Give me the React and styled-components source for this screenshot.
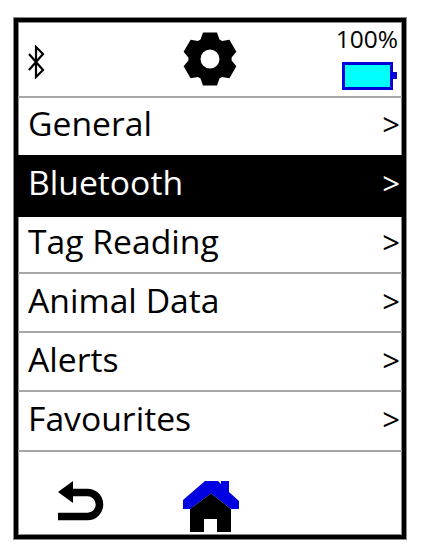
import styled, { createGlobalStyle } from "styled-components";

const GlobalStyle = createGlobalStyle`
  html, body {
    margin: 0;
    padding: 0;
    background: #fff;
  }
`;

// Device outline
const Frame = styled.div`
  box-sizing: border-box;
  width: 394px;
  height: 523px;
  margin: 17px 0 0 13px;
  border: 5px solid #000;
  outline: 1px solid #8a8a8a;
  outline-offset: -1px;
  box-shadow: inset 0 0 0 1px #8a8a8a;
  display: flex;
  flex-direction: column;
  font-family: "Open Sans", "Noto Sans", sans-serif;
  color: #000;
`;

const Header = styled.div`
  height: 74px;
  flex: none;
  display: grid;
  grid-template-columns: 1fr auto 1fr;
  align-items: center;
  padding: 0 5px;
  border-bottom: 2px solid #a6a6a6;
`;

const BluetoothSlot = styled.div`
  display: flex;
  padding: 6px 0 0 5px;
`;

const Status = styled.div`
  align-self: start;
  display: flex;
  flex-direction: column;
  align-items: flex-end;
  gap: 6px;
  margin-right: -1px;
`;

const Percent = styled.div`
  font-size: 24.5px;
  line-height: 34px;
`;

// Battery is a plain css box with a small tip
const Battery = styled.div`
  position: relative;
  box-sizing: border-box;
  width: 51px;
  height: 28px;
  margin-right: 5px;
  background: #00ffff;
  border: 3px solid #0000dc;
  &::after {
    content: "";
    position: absolute;
    right: -7px;
    top: 7px;
    width: 4px;
    height: 7px;
    background: #0000dc;
  }
`;

const Row = styled.div`
  box-sizing: border-box;
  height: ${(p) => p.$height}px;
  flex: none;
  display: flex;
  align-items: center;
  justify-content: space-between;
  margin: ${(p) => (p.$selected ? "0 -5px" : "0")};
  padding-left: ${(p) => (p.$selected ? "15px" : "10px")};
  padding-right: ${(p) => (p.$selected ? "7px" : "2px")};
  padding-bottom: ${(p) => p.$lift}px;
  background: ${(p) => (p.$selected ? "#000" : "transparent")};
  color: ${(p) => (p.$selected ? "#fff" : "#000")};
  border-bottom: ${(p) => (p.$plain ? "none" : "2px solid #a6a6a6")};
  font-size: 33.7px;
`;

const Label = styled.span`
  line-height: 44px;
`;

const Chevron = styled.span`
  font-size: 31px;
  line-height: 40px;
  margin-top: 2px;
`;

const Footer = styled.div`
  flex: 1;
  display: flex;
  align-items: flex-start;
  gap: 79px;
  padding: 29px 0 0 40px;
`;

// six tooth gear outline, built around the centre of a 54x54 box
const gearPath = () => {
  const c = 27;
  const pts = [];
  for (let i = 0; i < 6; i++) {
    const a = ((i * 60 - 90) * Math.PI) / 180;
    const p = (r, t) => [
      c + r * Math.cos(a) - t * Math.sin(a),
      c + r * Math.sin(a) + t * Math.cos(a),
    ];
    pts.push(p(19.5, -9.5), p(26.5, -7), p(26.5, 7), p(19.5, 9.5));
  }
  return "M" + pts.map((q) => q.map((n) => n.toFixed(1)).join(" ")).join("L") + "Z";
};

const GearIcon = () => (
  <svg width="54" height="54" viewBox="0 0 54 54">
    <path
      fillRule="evenodd"
      d={gearPath() + "M27 17.5a9.5 9.5 0 1 0 0 19a9.5 9.5 0 1 0 0-19Z"}
    />
  </svg>
);

const BluetoothIcon = () => (
  <svg width="17" height="34" viewBox="0 0 17 34" fill="none" stroke="#000" strokeWidth="2.2">
    <path d="M1 9L15 25L8 32V2L15 9L1 25" />
  </svg>
);

const BackIcon = () => (
  <svg width="46" height="40" viewBox="0 0 46 40">
    <path d="M0 11L15 0V22Z" />
    <path d="M12 11.5H29.5A12 12 0 0 1 29.5 35.5H0" fill="none" stroke="#000" strokeWidth="7.5" />
  </svg>
);

const HomeIcon = () => (
  <svg width="56" height="51" viewBox="0 0 56 51">
    <path
      fill="#0000e0"
      d="M0 19L22 0H35L38 3V0H46V11L56 20V28H48L28 12.5L7 28H0Z"
    />
    <path d="M7 28L28 12.5L48 28V51H34V38H21V51H7Z" />
  </svg>
);

const rows = [
  { label: "General", height: 57, lift: 8 },
  { label: "Bluetooth", height: 62, lift: 8, selected: true },
  { label: "Tag Reading", height: 57, lift: 8 },
  { label: "Animal Data", height: 59, lift: 6 },
  { label: "Alerts", height: 59, lift: 6 },
  { label: "Favourites", height: 60, lift: 6 },
];

export default function App() {
  return (
    <>
      <GlobalStyle />
      <Frame>
        <Header>
          <BluetoothSlot>
            <BluetoothIcon />
          </BluetoothSlot>
          <GearIcon />
          <Status>
            <Percent>100%</Percent>
            <Battery />
          </Status>
        </Header>
        {rows.map((r) => (
          <Row
            key={r.label}
            $height={r.height}
            $lift={r.lift}
            $selected={r.selected}
            $plain={r.label === "General" || r.selected}
          >
            <Label>{r.label}</Label>
            <Chevron>&gt;</Chevron>
          </Row>
        ))}
        <Footer>
          <BackIcon />
          <HomeIcon />
        </Footer>
      </Frame>
    </>
  );
}
